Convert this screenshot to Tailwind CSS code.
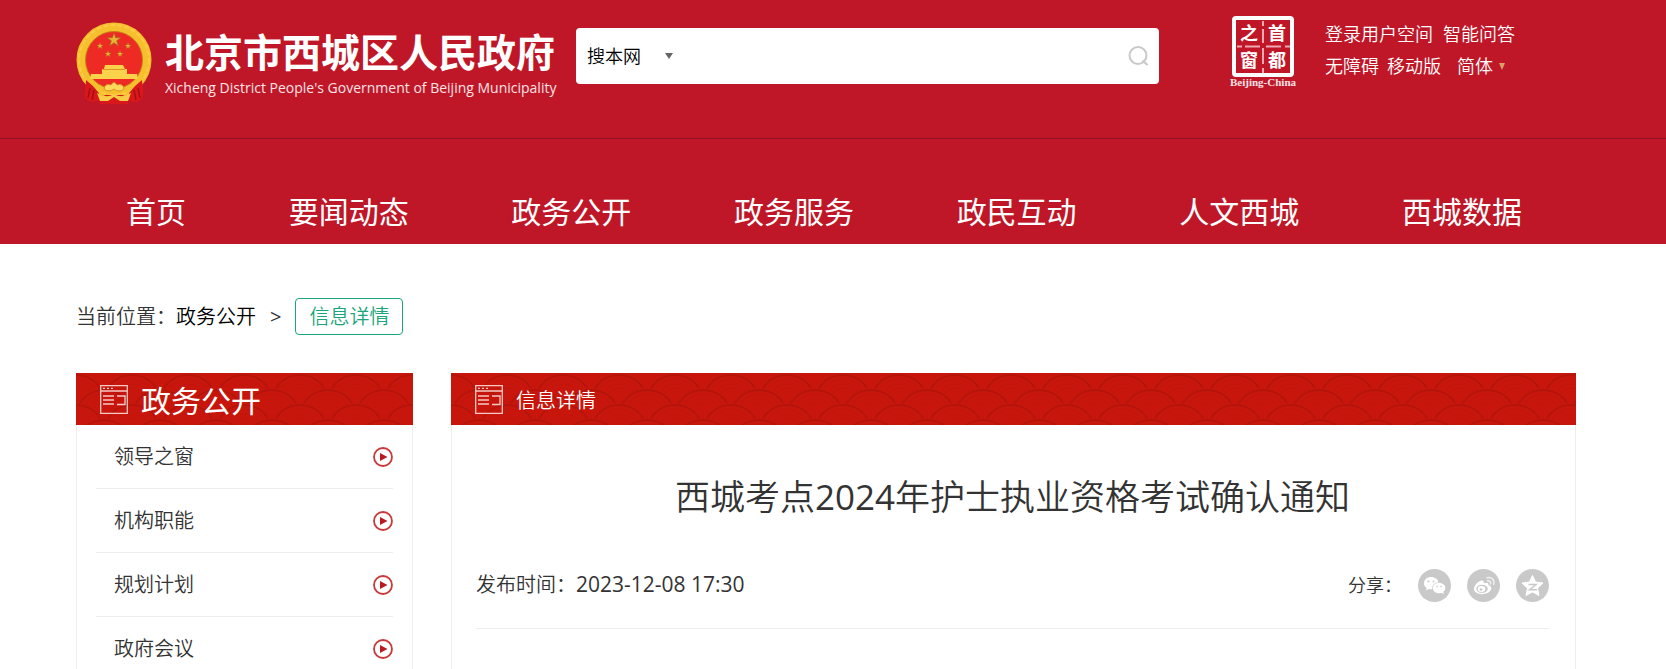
<!DOCTYPE html>
<html lang="zh-CN">
<head>
  <meta charset="UTF-8" />
  <meta name="viewport" content="width=device-width, initial-scale=1.0" />
  <title>西城考点2024年护士执业资格考试确认通知</title>
  <script src="https://cdn.jsdelivr.net/npm/@tailwindcss/browser@4"></script>
</head>
<body class="bg-white text-[#333] font-['Open_Sans','Noto_Sans_CJK_SC',sans-serif] font-[350] overflow-x-hidden">

  <!-- shared drawings -->
  <svg class="absolute w-0 h-0" aria-hidden="true">
    <defs>
      <path id="star" d="M0 -10 L2.3 -3.1 L9.5 -3.1 L3.7 1.2 L5.9 8.1 L0 3.9 L-5.9 8.1 L-3.7 1.2 L-9.5 -3.1 L-2.3 -3.1 Z" />
      <g id="scale">
        <path d="M0 28 A28 24 0 0 1 56 28 Z" fill="#c9160c" />
        <path d="M2 28 A26 22 0 0 1 54 28" fill="none" stroke="#b5140b" stroke-width="2" />
        <path d="M7 28 A21 18 0 0 1 49 28 M12 28 A16 13 0 0 1 44 28 M17 28 A11 9 0 0 1 39 28" fill="none" stroke="#c1150b" stroke-width="1" />
      </g>
      <pattern id="waves" width="56" height="30" patternUnits="userSpaceOnUse">
        <rect width="56" height="30" fill="#c9160c" />
        <use href="#scale" x="0" y="-19" />
        <use href="#scale" x="-28" y="-4" />
        <use href="#scale" x="28" y="-4" />
        <use href="#scale" x="0" y="11" />
        <use href="#scale" x="-28" y="26" />
        <use href="#scale" x="28" y="26" />
      </pattern>
      <g id="board" fill="none" stroke="#f6c9c4" stroke-width="1.3">
        <path d="M0.7 0.7 H27.3 V28.3 H0.7 Z M1 6 H27" />
        <path d="M3 3.4 H5 M7 3.4 H9 M11 3.4 H13" />
        <path d="M3 11 H14 M3 15 H14 M3 19 H14 M17 11 H25 V19.5 H17" />
      </g>
      <g id="play">
        <circle cx="10" cy="10" r="9" fill="#fff" stroke="#c8383a" stroke-width="1.8" />
        <path d="M7 6 L14.5 10 L7 14 Z" fill="#b81c22" />
      </g>
    </defs>
  </svg>

  <header class="bg-[#bf1728] text-white">
    <div class="border-b border-[#901124] pr-[14px]">
      <div class="flex max-w-[1500px] h-[138px] mx-auto">
        <a href="#" class="flex w-[500px] shrink-0 pt-[22px]">
          <svg class="w-[76px] h-[82px] shrink-0" viewBox="0 0 76 82" aria-hidden="true">
            <path d="M10 54 L9 73 Q10 82 22 79 L38 74 L54 79 Q66 82 67 73 L66 54 Z" fill="#d9181b" />
            <circle cx="38" cy="38" r="33" fill="#ee2a24" stroke="#f6bf2d" stroke-width="9" />
            <circle cx="38" cy="38" r="35" fill="none" stroke="#fbcb42" stroke-width="2" stroke-dasharray="5 2" />
            <circle cx="38" cy="38" r="28.5" fill="none" stroke="#c8801a" stroke-width="1" />
            <path d="M10 58 Q18 64 23 71 L20 79 Q10 81 9 73 Z M66 58 Q58 64 53 71 L56 79 Q66 81 67 73 Z" fill="#d9181b" />
            <path d="M14 66 L12 76 M18 68 L16 78 M62 66 L64 76 M58 68 L60 78" stroke="#a90d14" stroke-width="1.5" />
            <g fill="#e8b437" stroke="#a8691c" stroke-width="1">
              <use href="#star" transform="translate(38 18) scale(.72)" />
              <use href="#star" transform="translate(24 24) scale(.34)" />
              <use href="#star" transform="translate(52 24) scale(.34)" />
              <use href="#star" transform="translate(32 32) scale(.34)" />
              <use href="#star" transform="translate(44 32) scale(.34)" />
            </g>
            <path d="M29 43 H47 L49 47 H51 V52 H61 L62 57 H14 L15 52 H26 V47 H28 Z" fill="#fbd24a" />
            <path d="M27 47.5 H49" stroke="#d9952a" stroke-width="1" />
            <path d="M28 67 Q29 61 35 63 Q38 58 41 63 Q47 61 48 67 Q43 71 38 67 Q33 71 28 67 Z" fill="#ffd95b" stroke="#d9952a" stroke-width="1" />
            <path d="M24 76 L29 73 H47 L52 76 V82 H24 Z" fill="#d9181b" />
            <path d="M21 71 Q30 77 38 72 Q46 77 55 71 L52 79 H44 L38 75 L32 79 H24 Z" fill="#f8cd45" />
          </svg>
          <span class="block pl-[13px] pt-[3px] whitespace-nowrap">
            <span class="block text-[39px] leading-[54px] font-bold">北京市西城区人民政府</span>
            <span class="block text-[14px] leading-[18px] font-normal text-[#fbe3e5]">Xicheng District People's Government of Beijing Municipality</span>
          </span>
        </a>

        <form class="flex items-center w-[583px] h-14 mt-7 px-[11px] bg-white rounded-[4px] text-black" onsubmit="return false">
          <div class="relative flex items-center shrink-0">
            <select aria-label="搜索范围" class="appearance-none bg-transparent w-[94px] text-[18px] leading-7 outline-none">
              <option>搜本网</option>
            </select>
            <svg class="absolute right-2 w-2 h-[6px] pointer-events-none" viewBox="0 0 8 6" aria-hidden="true"><path d="M0 0 H8 L4 6 Z" fill="#666" /></svg>
          </div>
          <input type="search" aria-label="搜索" class="grow min-w-0 h-full outline-none text-[18px]" />
          <button type="submit" aria-label="搜索" class="shrink-0">
            <svg class="w-5 h-5" viewBox="0 0 20 20" fill="none" stroke="#c9c9c9" stroke-width="2"><circle cx="10" cy="9.5" r="8.5" /><path d="M14.5 14.5 L19.5 19" /></svg>
          </button>
        </form>

        <a href="#" class="w-[68px] ml-[70px] pt-4 shrink-0 flex flex-col items-center">
          <svg class="w-[62px] h-[61px]" viewBox="0 0 62 61" aria-hidden="true">
            <rect x="2" y="2" width="58" height="57" rx="2" fill="none" stroke="#fff" stroke-width="4" />
            <path d="M31 5 V10 M31 13 V27 M31 32 V48 M31 52 V57 M5 30.5 H10 M13 30.5 H28 M34 30.5 H49 M53 30.5 H58" stroke="#f0a9b0" stroke-width="2" />
            <g fill="#fff" font-family="Noto Sans CJK SC, sans-serif" font-weight="700" font-size="18" text-anchor="middle">
              <text x="17" y="24">之</text><text x="45" y="24">首</text>
              <text x="17" y="51">窗</text><text x="45" y="51">都</text>
            </g>
          </svg>
          <span class="text-[11px] leading-[11px] font-bold font-['Liberation_Serif',serif] text-[#fbe3e5] whitespace-nowrap">Beijing-China</span>
        </a>

        <div class="pt-[18px] ml-7 text-[18px] leading-[32px] whitespace-nowrap">
          <div class="flex gap-[10px]"><a href="#">登录用户空间</a><a href="#">智能问答</a></div>
          <div class="flex items-center gap-2">
            <a href="#">无障碍</a><a href="#">移动版</a>
            <button type="button" class="flex items-center gap-[6px] pl-2">简体
              <svg class="w-[6px] h-[7px]" viewBox="0 0 6 7" aria-hidden="true"><path d="M0 0 H6 L3 7 Z" fill="#d9a066" /></svg>
            </button>
          </div>
        </div>
      </div>
    </div>
    <nav class="pr-[14px]">
      <div class="flex justify-between items-end max-w-[1500px] h-[105px] mx-auto pl-[50px] pr-[54px] pb-[10px] text-[30px] leading-[44px] font-normal whitespace-nowrap">
        <a href="#">首页</a>
        <a href="#">要闻动态</a>
        <a href="#">政务公开</a>
        <a href="#">政务服务</a>
        <a href="#">政民互动</a>
        <a href="#">人文西城</a>
        <a href="#">西城数据</a>
      </div>
    </nav>
  </header>

  <main class="pr-[14px]">
    <div class="max-w-[1500px] mx-auto">
      <div class="flex items-center pt-[54px] text-[20px] leading-[35px]">
        <span>当前位置：</span>
        <a href="#" class="text-black">政务公开</a>
        <span class="px-[14px] font-normal">&gt;</span>
        <a href="#" class="border border-[#1aa57c] rounded-[4px] px-[13px] text-[#1aa57c]">信息详情</a>
      </div>

      <div class="flex items-start gap-[38px] mt-[38px]">
        <aside class="w-[337px] shrink-0">
          <h2 class="relative h-[52px] overflow-hidden text-white">
            <svg class="absolute inset-0 w-full h-full" aria-hidden="true"><rect width="100%" height="100%" fill="url(#waves)" /></svg>
            <span class="relative flex items-center h-full pl-6 gap-[13px] text-[30px] leading-[44px]">
              <svg class="w-7 h-[29px]" viewBox="0 0 28 29" aria-hidden="true"><use href="#board" /></svg>
              <span class="pt-1 font-normal">政务公开</span>
            </span>
          </h2>
          <ul class="border-x border-[#eee] px-[19px] text-[20px] leading-[63px]">
            <li class="border-b border-[#eee]"><a href="#" class="flex items-center justify-between pl-[18px]">领导之窗<svg class="w-5 h-5" viewBox="0 0 20 20" aria-hidden="true"><use href="#play" /></svg></a></li>
            <li class="border-b border-[#eee]"><a href="#" class="flex items-center justify-between pl-[18px]">机构职能<svg class="w-5 h-5" viewBox="0 0 20 20" aria-hidden="true"><use href="#play" /></svg></a></li>
            <li class="border-b border-[#eee]"><a href="#" class="flex items-center justify-between pl-[18px]">规划计划<svg class="w-5 h-5" viewBox="0 0 20 20" aria-hidden="true"><use href="#play" /></svg></a></li>
            <li class="border-b border-[#eee]"><a href="#" class="flex items-center justify-between pl-[18px]">政府会议<svg class="w-5 h-5" viewBox="0 0 20 20" aria-hidden="true"><use href="#play" /></svg></a></li>
          </ul>
        </aside>

        <section class="grow min-w-0">
          <h2 class="relative h-[52px] overflow-hidden text-white">
            <svg class="absolute inset-0 w-full h-full" aria-hidden="true"><rect width="100%" height="100%" fill="url(#waves)" /></svg>
            <span class="relative flex items-center h-full pl-6 gap-[13px] text-[20px] leading-[44px]">
              <svg class="w-7 h-[29px]" viewBox="0 0 28 29" aria-hidden="true"><use href="#board" /></svg>
              <span class="pt-1">信息详情</span>
            </span>
          </h2>
          <article class="border-x border-[#eee] pl-6 pr-[26px] pt-[46px] pb-16">
            <h1 class="text-[35px] leading-[52px] text-center">西城考点<span class="font-normal">2024</span>年护士执业资格考试确认通知</h1>
            <div class="flex items-center justify-between h-[106px] pt-[18px] border-b border-[#eee]">
              <p class="text-[20px]">发布时间：<time class="text-[21px] font-normal" datetime="2023-12-08T17:30">2023-12-08 17:30</time></p>
              <div class="flex items-center gap-4 pt-[2px] text-[18px]">
                <span>分享：</span>
                <a href="#" aria-label="微信">
                  <svg class="w-[33px] h-[33px]" viewBox="0 0 33 33">
                    <circle cx="16.5" cy="16.5" r="16.5" fill="#c9c9c9" />
                    <path d="M13 8 C9 8 6 10.7 6 14.2 C6 16.2 7 17.8 8.6 19 L8 21.5 L10.8 20 C12 20.4 13.5 20.4 14.3 20.2 C13.5 16 17 13.5 20.5 13.5 C20 10.3 17 8 13 8 Z" fill="#fff" />
                    <ellipse cx="21" cy="19" rx="6.3" ry="5.2" fill="#fff" />
                    <path d="M23 23.5 L25.8 25 L25.3 22 Z" fill="#fff" />
                    <g fill="#c9c9c9"><circle cx="10.5" cy="12.5" r="1" /><circle cx="15.5" cy="12.5" r="1" /><circle cx="19" cy="17.5" r=".8" /><circle cx="23" cy="17.5" r=".8" /></g>
                  </svg>
                </a>
                <a href="#" aria-label="微博">
                  <svg class="w-[33px] h-[33px]" viewBox="0 0 33 33">
                    <circle cx="16.5" cy="16.5" r="16.5" fill="#c9c9c9" />
                    <path d="M7 20 C7 16 12 11 15.5 11.5 C17 11.8 16.8 13.3 16.6 14.3 C19 13.3 22 13.3 21.5 16.3 C23.5 16.8 24.5 18 24.3 19.5 C23.8 23 19.5 25.2 15 25.2 C10.5 25.2 7 23 7 20 Z" fill="#fff" />
                    <ellipse cx="15" cy="19.8" rx="5.8" ry="4" fill="#c9c9c9" />
                    <ellipse cx="14.5" cy="20" rx="3.9" ry="3" fill="#fff" />
                    <circle cx="14" cy="20.5" r="1.3" fill="#c9c9c9" />
                    <path d="M20 8.7 C24.5 7.5 28 11 26.5 15.5 M20.5 11.8 C22.8 11.3 24.3 13 23.5 15" fill="none" stroke="#f1f1f1" stroke-width="1.4" stroke-linecap="round" />
                  </svg>
                </a>
                <a href="#" aria-label="QQ空间">
                  <svg class="w-[33px] h-[33px]" viewBox="0 0 33 33">
                    <circle cx="16.5" cy="16.5" r="16.5" fill="#c9c9c9" />
                    <path d="M16.5 6.5 L19.5 13 L27 14 L21.5 19.2 L23 26.5 L16.5 23 L10 26.5 L11.5 19.2 L6 14 L13.5 13 Z" fill="#fff" stroke="#fff" stroke-linejoin="round" />
                    <path d="M12.5 15.5 H20 L13.5 20.8 H21" fill="none" stroke="#c9c9c9" stroke-width="1.5" />
                  </svg>
                </a>
              </div>
            </div>
          </article>
        </section>
      </div>
    </div>
  </main>

</body>
</html>
